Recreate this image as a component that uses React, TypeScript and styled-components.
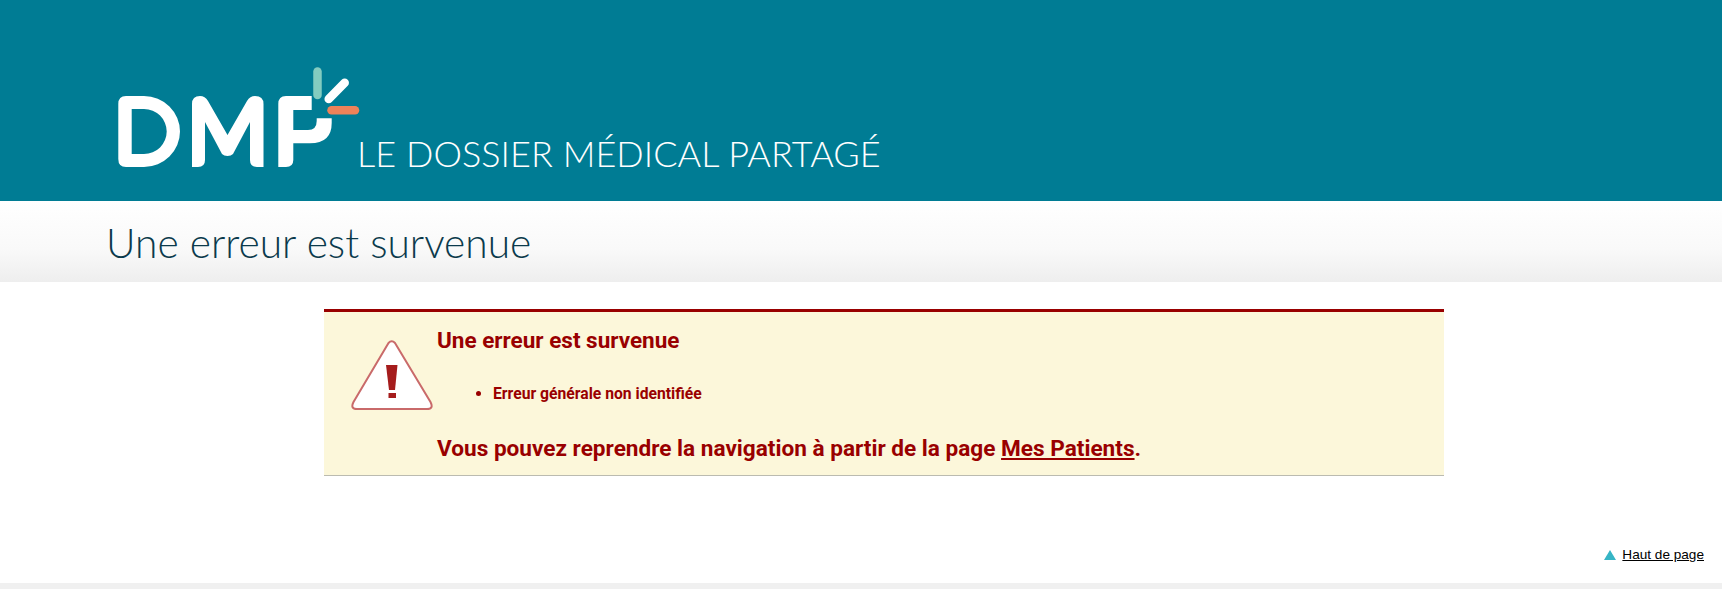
import styled, { createGlobalStyle } from 'styled-components';

const GlobalStyle = createGlobalStyle`
  html, body {
    margin: 0;
    padding: 0;
    background: #fff;
  }
`;

function Logo() {
  return (
    <LogoSvg viewBox="0 0 250 110" aria-hidden="true">
      <path
        fill="#fff"
        fillRule="evenodd"
        d="M.3 39Q.3 31 8 31H26A36 35.5 0 0 1 26 102H8Q.3 102 .3 94ZM13.7 44V89H26A22.7 22.5 0 0 0 26 44Z"
      />
      <path
        fill="#fff"
        d="M74 39Q74 31 82 31Q87 31 90 36L109.5 70L129 36Q132 31 137 31Q145.5 31 145.5 39V102H139Q132 102 132 95V57L115 89Q113 91 109.5 91Q106 91 104 89L87 57V95Q87 102 80 102H74Z"
      />
      <path
        fill="#fff"
        d="M160.3 39Q160.3 31 168 31H193.7V45H175.3V65H190Q198.7 65 198.7 56V53.3H213.7V58Q213.7 78.3 192 78.3H175.3V95Q175.3 102 168 102H160.3Z"
      />
      <path d="M199.5 6.5V30" stroke="#83ccc0" strokeWidth="8.5" strokeLinecap="round" />
      <path d="M210.7 34L226.7 17.7" stroke="#fff" strokeWidth="8.5" strokeLinecap="round" />
      <path d="M213.5 45.2H237" stroke="#ee8259" strokeWidth="8.5" strokeLinecap="round" />
    </LogoSvg>
  );
}

export default function App() {
  return (
    <Page>
      <GlobalStyle />
      <Header>
        <Logo />
        <Tagline>LE DOSSIER MÉDICAL PARTAGÉ</Tagline>
      </Header>
      <TitleBar>
        <PageTitle>Une erreur est survenue</PageTitle>
      </TitleBar>
      <Main>
        <Alert>
          <WarningIcon viewBox="0 0 82 72" aria-hidden="true">
            <path
              d="M37.5 4Q40.7 .5 44 4L79.5 63Q83 70 76 70H6Q-1 70 2.5 63Z"
              fill="#fff"
              stroke="#c96a6a"
              strokeWidth="2"
              strokeLinejoin="round"
            />
            <path d="M35 26H46.5L44 51H38Z" fill="#a51c1c" />
            <rect x="37.5" y="54" width="7.5" height="5" fill="#a51c1c" />
          </WarningIcon>
          <AlertBody>
            <AlertTitle>Une erreur est survenue</AlertTitle>
            <ErrorList>
              <li>Erreur générale non identifiée</li>
            </ErrorList>
            <AlertFooter>
              Vous pouvez reprendre la navigation à partir de la page <a href="#patients">Mes Patients</a>.
            </AlertFooter>
          </AlertBody>
        </Alert>
      </Main>
      <TopRow>
        <TopLink href="#top">Haut de page</TopLink>
      </TopRow>
      <Footer />
    </Page>
  );
}

const Page = styled.div`
  display: flex;
  flex-direction: column;
  height: 589px;
  overflow: hidden;
`;

const Header = styled.header`
  box-sizing: border-box;
  display: flex;
  align-items: flex-end;
  height: 201px;
  padding: 0 0 30px 118px;
  background: #007c94;
`;

const LogoSvg = styled.svg`
  display: block;
  width: 250px;
  height: 110px;
  margin-bottom: -4px;
`;

const Tagline = styled.div`
  margin-left: -11px;
  font-family: Lato, 'Open Sans', sans-serif;
  font-size: 36px;
  font-weight: 300;
  line-height: 36px;
  letter-spacing: 0.05px;
  color: #fff;
  white-space: nowrap;
`;

const TitleBar = styled.div`
  box-sizing: border-box;
  display: flex;
  align-items: center;
  height: 81px;
  padding: 2px 0 0 106px;
  background: linear-gradient(#ffffff, #f9f9f9 60%, #eeeeee);
`;

const PageTitle = styled.h1`
  margin: 0;
  font-family: Lato, 'Open Sans', sans-serif;
  font-size: 40.7px;
  font-weight: 300;
  color: #0b3a4c;
`;

const Main = styled.main`
  flex: 1;
  padding: 27px 0 0 324px;
`;

const Alert = styled.section`
  box-sizing: border-box;
  display: flex;
  align-items: flex-start;
  width: 1120px;
  height: 167px;
  padding: 15px 0 0 27px;
  background: #fcf7da;
  border-top: 3px solid #990000;
  border-bottom: 1px solid #bbbbb0;
`;

const WarningIcon = styled.svg`
  flex: none;
  width: 82px;
  height: 72px;
  margin-top: 12px;
`;

const AlertBody = styled.div`
  margin-left: 4px;
  font-family: Roboto, sans-serif;
  font-weight: 700;
  color: #990000;
`;

const AlertTitle = styled.h2`
  margin: 0;
  font-size: 22.5px;
  line-height: 26px;
`;

const ErrorList = styled.ul`
  margin: 32px 0 0;
  padding-left: 56px;
  font-size: 15.7px;
  line-height: 18px;
`;

const AlertFooter = styled.p`
  margin: 33px 0 0;
  font-size: 22.6px;
  line-height: 26px;

  a {
    color: inherit;
  }
`;

const TopRow = styled.div`
  display: flex;
  justify-content: flex-end;
  padding: 0 18px 20px 0;
`;

const TopLink = styled.a`
  display: flex;
  align-items: center;
  gap: 6px;
  font-family: 'Liberation Sans', sans-serif;
  font-size: 13.6px;
  line-height: 16px;
  color: #000;

  &::before {
    content: '';
    width: 0;
    height: 0;
    border-left: 6px solid transparent;
    border-right: 6px solid transparent;
    border-bottom: 10px solid #36b5c5;
  }
`;

const Footer = styled.footer`
  flex: none;
  height: 6px;
  background: #f0f0f0;
`;
